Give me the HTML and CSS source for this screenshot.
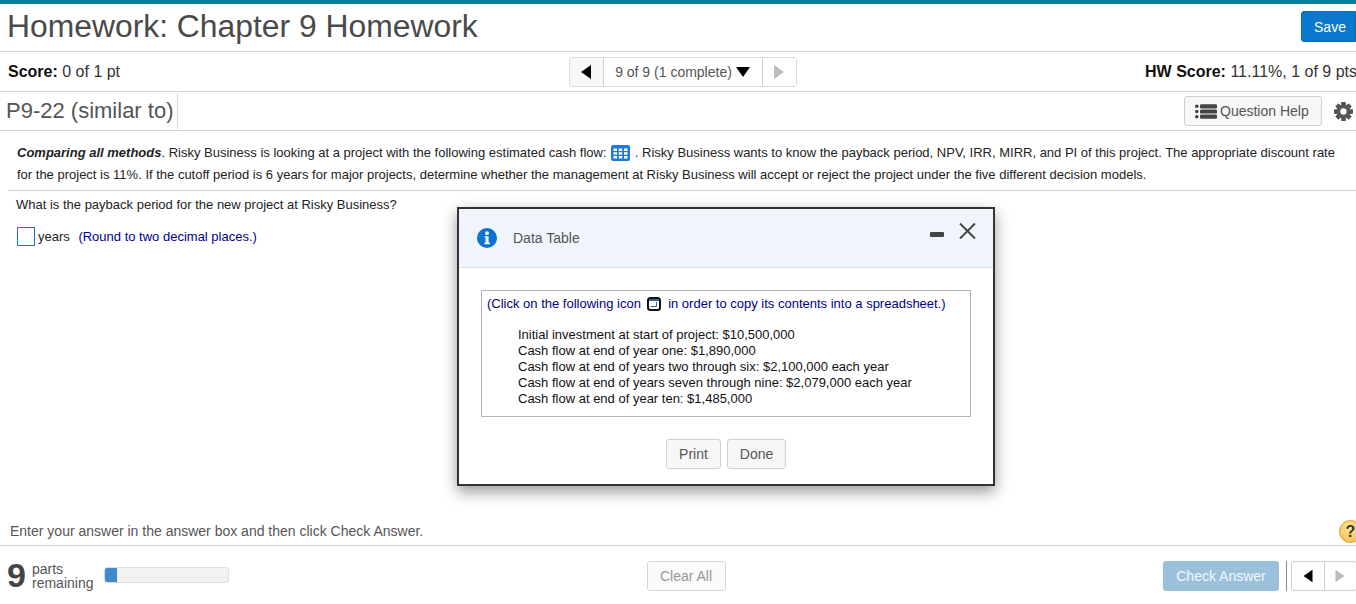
FILE: index.html
```html
<!DOCTYPE html>
<html lang="en">
<head>
<meta charset="utf-8">
<title>Homework: Chapter 9 Homework</title>
<link rel="stylesheet" href="styles.css">
</head>
<body>
<div class="page">
  <header class="head-row">
    <h1 class="page-title">Homework: Chapter 9 Homework</h1>
    <button class="btn-save">Save</button>
  </header>
  <div class="score-row">
    <div class="score"><b>Score:</b> 0 of 1 pt</div>
    <div class="nav-group">
      <span class="nav-cell nav-arrow"><i class="tri tri-left"></i></span>
      <span class="nav-cell nav-label">9 of 9 (1 complete)<i class="tri tri-down"></i></span>
      <span class="nav-cell nav-arrow nav-off"><i class="tri tri-right"></i></span>
    </div>
    <div class="hw-score"><b>HW Score:</b> 11.11%, 1 of 9 pts</div>
  </div>
  <div class="problem-row">
    <h2 class="problem-title">P9-22 (similar to)</h2>
    <div class="tools">
      <button class="btn-help">
        <svg class="help-icon" width="22" height="15" viewBox="0 0 22 15"><g fill="#444"><circle cx="1.8" cy="2.3" r="1.8"/><circle cx="1.8" cy="7.5" r="1.8"/><circle cx="1.8" cy="12.7" r="1.8"/><rect x="5" y="0.2" width="17" height="4.2" rx="1.2"/><rect x="5" y="5.4" width="17" height="4.2" rx="1.2"/><rect x="5" y="10.6" width="17" height="4.2" rx="1.2"/></g></svg>Question Help
      </button>
      <svg class="gear" width="19" height="19" viewBox="0 0 24 24"><g fill="#555"><rect x="9" y="0" width="6" height="24" rx="1"/><rect x="9" y="0" width="6" height="24" rx="1" transform="rotate(45 12 12)"/><rect x="9" y="0" width="6" height="24" rx="1" transform="rotate(90 12 12)"/><rect x="9" y="0" width="6" height="24" rx="1" transform="rotate(135 12 12)"/><circle cx="12" cy="12" r="8.500"/></g><circle cx="12" cy="12" r="4" fill="#fff"/></svg>
    </div>
  </div>
  <main class="content">
    <p class="intro"><b><i>Comparing all methods</i></b>. Risky Business is looking at a project with the following estimated cash flow: <svg class="grid-icon" width="19" height="16" viewBox="0 0 19 16"><rect width="19" height="16" rx="2" fill="#1f78dc"/><g fill="#fff"><rect x="2.500" y="3.500" width="3.500" height="2.500"/><rect x="7.700" y="3.500" width="3.500" height="2.500"/><rect x="13" y="3.500" width="3.500" height="2.500"/><rect x="2.500" y="7.200" width="3.500" height="2.500"/><rect x="7.700" y="7.200" width="3.500" height="2.500"/><rect x="13" y="7.200" width="3.500" height="2.500"/><rect x="2.500" y="11" width="3.500" height="2.500"/><rect x="7.700" y="11" width="3.500" height="2.500"/><rect x="13" y="11" width="3.500" height="2.500"/></g></svg> . Risky Business wants to know the payback period, NPV, IRR, MIRR, and PI of this project. The appropriate discount rate for the project is 11%. If the cutoff period is 6 years for major projects, determine whether the management at Risky Business will accept or reject the project under the five different decision models.</p>
    <div class="question">
      <p class="q-text">What is the payback period for the new project at Risky Business?</p>
      <p class="answer"><span class="answer-box"></span>years <span class="hint">(Round to two decimal places.)</span></p>
    </div>
  </main>
  <div class="instruction">
    <span>Enter your answer in the answer box and then click Check Answer.</span>
    <span class="help-ball">?</span>
  </div>
  <footer class="foot">
    <div class="parts">
      <span class="parts-num">9</span>
      <span class="parts-label">parts<br>remaining</span>
      <span class="progress"><span class="progress-fill"></span></span>
    </div>
    <button class="btn-clear">Clear All</button>
    <div class="foot-right">
      <button class="btn-check">Check Answer</button>
      <span class="foot-sep"></span>
      <div class="pager">
        <span class="pager-cell"><i class="tri tri-left"></i></span>
        <span class="pager-cell pager-off"><i class="tri tri-right"></i></span>
      </div>
    </div>
  </footer>
</div>

<section class="modal">
  <div class="modal-head">
    <svg class="info-icon" width="20" height="20" viewBox="0 0 20 20"><circle cx="10" cy="10" r="10" fill="#0b73d1"/><circle cx="10" cy="5.2" r="1.9" fill="#fff"/><path fill="#fff" d="M7.6 8.2h4v6.4h1.2v1.6H7.4v-1.6h1.2v-4.8h-1z"/></svg>
    <span class="modal-title">Data Table</span>
    <span class="modal-min"></span>
    <svg class="modal-close" width="17" height="16" viewBox="0 0 17 16"><path d="M1 .5l15 15M16 .5l-15 15" stroke="#444" stroke-width="2" fill="none"/></svg>
  </div>
  <div class="modal-body">
    <div class="data-box">
      <p class="copy-note">(Click on the following icon <svg class="copy-icon" width="14" height="14" viewBox="0 0 14 14"><rect x="1" y="1" width="12" height="12" rx="2.5" fill="#fff" stroke="#111" stroke-width="2"/><rect x="2" y="2" width="10" height="2" fill="#3a5f96"/><path d="M3.500 9.500h6V5" stroke="#3a5f96" fill="none"/></svg> in order to copy its contents into a spreadsheet.)</p>
      <ul class="data-lines">
        <li>Initial investment at start of project: $10,500,000</li>
        <li>Cash flow at end of year one: $1,890,000</li>
        <li>Cash flow at end of years two through six: $2,100,000 each year</li>
        <li>Cash flow at end of years seven through nine: $2,079,000 each year</li>
        <li>Cash flow at end of year ten: $1,485,000</li>
      </ul>
    </div>
    <div class="modal-actions">
      <button class="btn-plain btn-print">Print</button>
      <button class="btn-plain btn-done">Done</button>
    </div>
  </div>
</section>
</body>
</html>
```
FILE: styles.css
```css
* { box-sizing: border-box; }
html, body { margin: 0; padding: 0; height: 604px; overflow: hidden; }
body { font-family: "Liberation Sans", Arial, sans-serif; background: #fff; color: #222; position: relative; }
p, h1, h2, ul { margin: 0; padding: 0; }
button { font-family: inherit; cursor: pointer; }

.page { display: flex; flex-direction: column; height: 604px; border-top: 4px solid #007fa3; }

.head-row { height: 48px; flex: none; display: flex; justify-content: space-between; align-items: center; border-bottom: 1px solid #d0d2d8; padding-left: 7px; }
.page-title { font-size: 31.85px; font-weight: 400; color: #4a4a4a; line-height: 40px; margin-top: -4px; }
.btn-save { width: 55px; height: 31px; margin-top: -2px; background: #0a78cc; border: 1px solid #0a6cb8; border-radius: 3px 0 0 3px; color: #fff; font-size: 14px; padding: 0 0 0 3px; }

.score-row { height: 40px; flex: none; display: grid; grid-template-columns: 1fr auto 1fr; align-items: center; border-bottom: 1px solid #d0d2d8; padding: 0 0 0 8px; font-size: 16px; color: #333; }
.score-row b { color: #111; }
.hw-score { justify-self: end; white-space: nowrap; margin-right: -1px; }
.nav-group { display: flex; height: 30px; margin-left: 1px; border: 1px solid #dcdcdc; border-radius: 3px; background: #f7f7f7; font-size: 14px; color: #555; }
.nav-cell { display: flex; align-items: center; justify-content: center; }
.nav-arrow { width: 33px; }
.nav-label { width: 160px; border-left: 1px solid #d0d0d0; border-right: 1px solid #d0d0d0; background: #fff; }
.nav-off { background: #fff; }

.tri { display: inline-block; width: 0; height: 0; border-style: solid; }
.tri-left { border-width: 7px 10px 7px 0; border-color: transparent #000 transparent transparent; }
.tri-right { border-width: 7px 0 7px 10px; border-color: transparent transparent transparent #bdbdbd; }
.tri-down { border-width: 10px 7px 0 7px; border-color: #000 transparent transparent transparent; margin-left: 4px; }

.problem-row { height: 39px; flex: none; display: flex; justify-content: space-between; align-items: center; border-bottom: 1px solid #d0d2d8; padding-left: 6px; }
.problem-title { font-size: 22px; font-weight: 400; color: #555; line-height: 36px; padding-right: 4px; border-right: 1px solid #d8d8d8; height: 36px; margin-top: -1px; }
.tools { display: flex; align-items: center; }
.btn-help { display: flex; align-items: center; width: 138px; height: 30px; padding: 0 0 0 10px; border: 1px solid #d0d0d0; border-radius: 3px; background: #f7f7f7; color: #555; font-size: 14px; margin-right: 12px; white-space: nowrap; }
.help-icon { margin-right: 3px; }
.gear { margin-right: 3px; }

.content { flex: 1; padding: 11px 0 0 8px; font-size: 13px; color: #222; }
.intro { padding: 0 16px 0 9px; line-height: 22px; height: 49px; border-bottom: 1px solid #d0d2d8; }
.grid-icon { vertical-align: -4px; margin: 0 1px; }
.question { padding: 6px 0 0 8px; }
.q-text { line-height: 16px; }
.answer { display: flex; align-items: center; margin-top: 14px; line-height: 18px; white-space: pre; }
.answer-box { width: 18px; height: 19px; border: 1px solid #1e7b9e; margin: 0 3px 0 1px; }
.hint { color: #00008b; margin-left: 5px; }

.instruction { height: 28px; flex: none; display: flex; justify-content: space-between; align-items: center; border-bottom: 1px solid #d0d2d8; padding: 0 0 1px 10px; font-size: 14px; color: #555; position: relative; overflow: hidden; }
.help-ball { position: absolute; left: 1339px; top: 2px; width: 23px; height: 23px; border-radius: 50%; background: radial-gradient(circle at 50% 35%, #ffe9a0, #efb73e); border: 1px solid #d9a02e; color: #333; font-weight: 700; font-size: 16px; text-align: center; line-height: 21px; }

.foot { height: 58px; flex: none; display: grid; grid-template-columns: 1fr auto 1fr; align-items: center; }
.parts { display: flex; align-items: center; padding-left: 7px; }
.parts-num { font-size: 34px; font-weight: 700; color: #444; line-height: 34px; width: 25px; }
.parts-label { font-size: 14px; line-height: 14px; color: #555; margin: 2px 11px 0 0; }
.progress { display: block; width: 125px; height: 16px; margin-top: -1px; background: #f2f2f2; border: 1px solid #ddd; border-radius: 3px; overflow: hidden; }
.progress-fill { display: block; width: 13px; height: 16px; background: #3f8acb; margin: -1px 0 0 -1px; }
.btn-clear { width: 79px; height: 30px; background: #fafafa; border: 1px solid #d6d6d6; border-radius: 3px; color: #999; font-size: 14px; padding: 0; margin-left: 16px; margin-top: 2px; }
.foot-right { justify-self: end; display: flex; align-items: center; margin-top: 2px; }
.btn-check { width: 116px; height: 30px; background: #9bc0dc; border: none; border-radius: 3px; color: #f4f8fb; font-size: 14px; padding: 0; }
.foot-sep { width: 1px; height: 30px; background: #888; margin: 0 4px 0 7px; }
.pager { display: flex; width: 66px; height: 30px; margin-right: -1px; border: 1px solid #cfcfcf; border-radius: 3px; }
.pager-cell { flex: 1; display: flex; align-items: center; justify-content: center; }
.pager-cell + .pager-cell { border-left: 1px solid #cfcfcf; }
.pager-cell .tri { transform: scale(.9); }

.modal { position: absolute; left: 457px; top: 207px; width: 538px; height: 279px; background: #fff; border: 2px solid #333; box-shadow: 0 6px 14px rgba(0,0,0,.4); }
.modal-head { height: 59px; background: #f0f5fc; border-bottom: 1px solid #d3e2f0; display: flex; align-items: center; padding-left: 18px; position: relative; }
.modal-title { font-size: 14px; color: #555; margin-left: 16px; }
.modal-min { position: absolute; left: 471px; top: 23px; width: 14px; height: 5px; background: #444; border-radius: 1px; }
.modal-close { position: absolute; left: 500px; top: 14px; }
.modal-body { padding: 22px 22px 0; }
.data-box { width: 490px; height: 127px; border: 1px solid #b5b5b5; padding: 5px 5px 0; font-size: 13px; }
.copy-note { color: #00008b; line-height: 16px; white-space: nowrap; }
.copy-icon { vertical-align: -3px; margin: 0 4px 0 2px; }
.data-lines { list-style: none; margin: 15px 0 0 31px; line-height: 16px; color: #111; }
.modal-actions { display: flex; justify-content: center; gap: 6px; margin-top: 22px; }
.btn-plain { height: 30px; background: #f7f7f7; border: 1px solid #d0d0d0; border-radius: 3px; color: #555; font-size: 14px; padding: 0; }
.btn-print { width: 55px; }
.btn-done { width: 59px; }
```
